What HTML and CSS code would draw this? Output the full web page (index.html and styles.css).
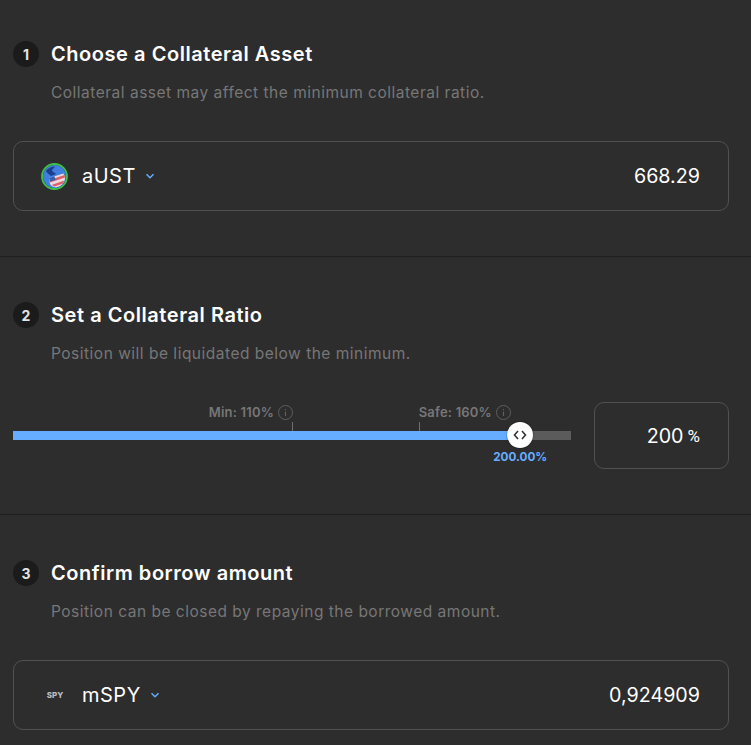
FILE: index.html
```html
<!DOCTYPE html>
<html lang="en">
<head>
  <meta charset="UTF-8" />
  <meta name="viewport" content="width=device-width, initial-scale=1.0"/>
  <title>Borrow</title>
  <link rel="stylesheet" href="styles.css">
</head>
<body>

  <section class="step step-first">
    <h2 class="step-title"><span class="step-num">1</span>Choose a Collateral Asset</h2>
    <p class="step-desc">Collateral asset may affect the minimum collateral ratio.</p>
    <div class="asset-box">
      <div class="asset">
        <svg class="asset-icon" width="27" height="27" viewBox="0 0 27 27">
          <circle cx="13.500" cy="13.500" r="11.500" fill="#3f7fe0"/>
          <path d="M5 8c2-3 5-4.500 9-4.500-1 2-3 2.500-3 4s3 2 4 3.500l-5 2c-2-2-4-2.500-5-5z" fill="#1d3f8a"/>
          <path d="M8 15l14.500-4.500 1.500 4c0 3-1 5-3 7-2 2-5 3-8 2.500-2-.5-3-1.500-4-3z" fill="#f0d9dc"/>
          <path d="M8.500 17l15-5 .5 2.500-15 5zM10.500 22l13-4.500-1.500 3-8.500 3z" fill="#d9606c"/>
          <path d="M8 15l5.500-1.700 1 3.700-5.500 1.500z" fill="#3a5fa8"/>
          <circle cx="13.500" cy="13.500" r="12.500" fill="none" stroke="#3ec14a" stroke-width="1.800"/>
        </svg>
        <span class="asset-name">aUST</span>
        <svg class="chevron" width="10" height="6" viewBox="0 0 10 6"><path d="M1.500 1.200L5 4.700l3.500-3.500" fill="none" stroke="#66adff" stroke-width="1.500"/></svg>
      </div>
      <span class="amount">668.29</span>
    </div>
  </section>

  <section class="step">
    <h2 class="step-title"><span class="step-num">2</span>Set a Collateral Ratio</h2>
    <p class="step-desc">Position will be liquidated below the minimum.</p>
    <div class="ratio-row">
      <div class="slider">
        <div class="track"><div class="track-fill" style="width: 90.9%"></div></div>
        <div class="mark" style="left: 50%">
          <span class="mark-label mark-label-before">Min: 110%
            <svg width="15" height="15" viewBox="0 0 15 15"><circle cx="7.500" cy="7.500" r="7" fill="none" stroke="#5f5f5f"/><path d="M7.500 6.500v4.500M7.500 4v1.300" stroke="#5f5f5f" stroke-width="1.200"/></svg>
          </span>
        </div>
        <div class="mark" style="left: 72.7%">
          <span class="mark-label mark-label-after">Safe: 160%
            <svg width="15" height="15" viewBox="0 0 15 15"><circle cx="7.500" cy="7.500" r="7" fill="none" stroke="#5f5f5f"/><path d="M7.500 6.500v4.500M7.500 4v1.300" stroke="#5f5f5f" stroke-width="1.200"/></svg>
          </span>
        </div>
        <div class="thumb" style="left: 90.9%">
          <svg width="14" height="10" viewBox="0 0 14 10"><path d="M5 1L1.500 5 5 9M9 1l3.500 4L9 9" fill="none" stroke="#2d2d2d" stroke-width="1.500"/></svg>
        </div>
        <span class="thumb-value" style="left: 90.9%">200.00%</span>
      </div>
      <div class="ratio-box">200 <span class="ratio-unit">%</span></div>
    </div>
  </section>

  <section class="step">
    <h2 class="step-title"><span class="step-num">3</span>Confirm borrow amount</h2>
    <p class="step-desc">Position can be closed by repaying the borrowed amount.</p>
    <div class="asset-box">
      <div class="asset">
        <span class="asset-tag">SPY</span>
        <span class="asset-name">mSPY</span>
        <svg class="chevron" width="10" height="6" viewBox="0 0 10 6"><path d="M1.500 1.200L5 4.700l3.500-3.500" fill="none" stroke="#66adff" stroke-width="1.500"/></svg>
      </div>
      <span class="amount">0,924909</span>
    </div>
  </section>

</body>
</html>
```

FILE: styles.css
```css
* {
  box-sizing: border-box;
}
html, body {
  height: 745px;
  overflow: hidden;
}
body {
  font-family: Inter, Arial, sans-serif;
  margin: 0;
  background-color: #2d2d2d;
  color: #fff;
}
.step {
  height: 258px;
  padding: 45px 22px 0 13px;
  border-bottom: 1px solid #1f1f1f;
}
.step-first {
  height: 257px;
  padding-top: 41px;
}
.step:last-child {
  border-bottom: none;
}
.step-title {
  display: flex;
  align-items: center;
  gap: 12px;
  height: 26px;
  margin: 0;
  font-size: 20px;
  font-weight: 600;
  letter-spacing: 0.55px;
}
.step-num {
  display: flex;
  justify-content: center;
  align-items: center;
  width: 26px;
  height: 26px;
  border-radius: 50%;
  background-color: #1b1b1b;
  color: #e4e4e4;
  font-size: 14px;
  font-weight: 700;
  letter-spacing: 0;
}
.step-desc {
  margin: 17px 0 0 38px;
  height: 18px;
  line-height: 18px;
  font-size: 15.500px;
  letter-spacing: 0.5px;
  color: #777;
}
.asset-box {
  display: flex;
  justify-content: space-between;
  align-items: center;
  height: 70px;
  margin-top: 39px;
  padding: 0 28px 0 27px;
  border: 1px solid #515151;
  border-radius: 10px;
}
.asset {
  display: flex;
  align-items: center;
}
.asset-icon {
  margin-right: 14px;
}
.asset-tag {
  width: 27px;
  margin-right: 14px;
  padding-left: 1px;
  text-align: center;
  font-size: 8px;
  font-weight: 800;
  color: #bdbdbd;
}
.asset-name {
  font-size: 20px;
  letter-spacing: 0.5px;
  margin-right: 9px;
}
.amount {
  font-size: 19.700px;
}
.ratio-row {
  display: flex;
  align-items: flex-start;
  justify-content: space-between;
  margin-top: 39px;
}
.slider {
  position: relative;
  width: 558px;
  height: 67px;
}
.track {
  position: absolute;
  top: 29px;
  left: 0;
  right: 0;
  height: 9px;
  background-color: #5b5b5b;
}
.track-fill {
  height: 100%;
  background-color: #66adff;
}
.mark {
  position: absolute;
  top: 20px;
  width: 1px;
  height: 9px;
  background-color: #6e6e6e;
}
.mark-label {
  position: absolute;
  bottom: 11px;
  display: flex;
  align-items: center;
  gap: 4px;
  white-space: nowrap;
  font-size: 13px;
  font-weight: 600;
  letter-spacing: 0.2px;
  color: #777;
}
.mark-label-before {
  right: 0;
}
.mark-label-after {
  left: 0;
}
.thumb {
  position: absolute;
  top: 20px;
  display: flex;
  justify-content: center;
  align-items: center;
  width: 26px;
  height: 26px;
  margin-left: -13px;
  border-radius: 50%;
  background-color: #fff;
  box-shadow: 0 0 2px rgba(0, 0, 0, 0.5);
}
.thumb-value {
  position: absolute;
  top: 48px;
  transform: translateX(-50%);
  font-size: 11.700px;
  font-weight: 700;
  color: #66adff;
}
.ratio-box {
  display: flex;
  justify-content: flex-end;
  align-items: center;
  gap: 4px;
  width: 135px;
  height: 67px;
  padding-right: 28px;
  border: 1px solid #515151;
  border-radius: 10px;
  font-size: 19.700px;
}
.ratio-unit {
  font-family: Roboto, Arial, sans-serif;
  font-size: 17px;
}
```
